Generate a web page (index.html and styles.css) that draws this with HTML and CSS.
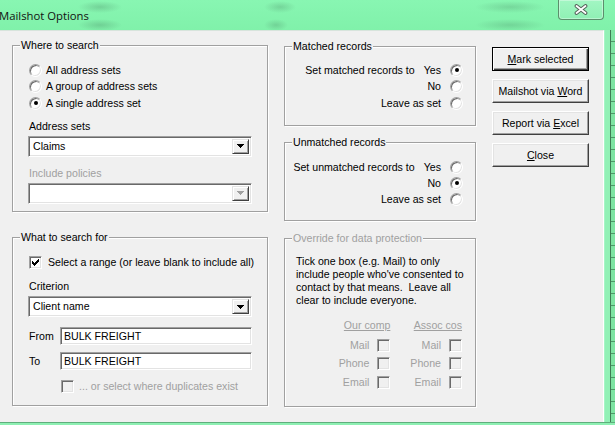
FILE: index.html
```html
<!DOCTYPE html>
<html>
<head>
<meta charset="utf-8">
<title>Mailshot Options</title>
<link rel="stylesheet" href="styles.css">
</head>
<body>
<div class="screen">
  <div class="titlebar">
    <span class="title">Mailshot Options</span>
    <div class="close-btn">
      <svg width="14" height="11" viewBox="0 0 14 11"><path d="M2.5 2 L11.5 9 M11.5 2 L2.5 9" stroke="#55625a" stroke-width="3.8" stroke-linecap="round"/><path d="M2.5 2 L11.5 9 M11.5 2 L2.5 9" stroke="#fff" stroke-width="1.8" stroke-linecap="round"/></svg>
    </div>
  </div>
  <div class="main">
    <div class="client">
      <div class="col-left">
        <div class="group g-where">
          <div class="legend">Where to search</div>
          <div class="radio-list">
            <div class="opt"><span class="radio"></span>All address sets</div>
            <div class="opt"><span class="radio"></span>A group of address sets</div>
            <div class="opt"><span class="radio on"></span>A single address set</div>
          </div>
          <div class="flabel">Address sets</div>
          <div class="combo"><span class="combo-text">Claims</span><span class="dd"><svg width="7" height="4" viewBox="0 0 7 4" shape-rendering="crispEdges"><path d="M0 0h7v1h-1v1h-1v1h-1v1h-1v-1h-1v-1h-1v-1h-1z" fill="#000"/></svg></span></div>
          <div class="flabel dim gap-lg">Include policies</div>
          <div class="combo"><span class="combo-text"></span><span class="dd"><svg width="7" height="4" viewBox="0 0 7 4" shape-rendering="crispEdges"><path d="M0 0h7v1h-1v1h-1v1h-1v1h-1v-1h-1v-1h-1v-1h-1z" fill="#a0a0a0"/></svg></span></div>
        </div>

        <div class="group g-what">
          <div class="legend">What to search for</div>
          <div class="check-row">
            <span class="check"><svg width="7" height="7" viewBox="0 0 7 7" shape-rendering="crispEdges"><path d="M0 2h1v1h1v1h1v-1h1v-1h1v-1h1v-1h1v3h-1v1h-1v1h-1v1h-1v1h-1v-1h-1v-1h-1z" fill="#000"/></svg></span>
            <span>Select a range (or leave blank to include all)</span>
          </div>
          <div class="flabel gap-lg">Criterion</div>
          <div class="combo"><span class="combo-text">Client name</span><span class="dd"><svg width="7" height="4" viewBox="0 0 7 4" shape-rendering="crispEdges"><path d="M0 0h7v1h-1v1h-1v1h-1v1h-1v-1h-1v-1h-1v-1h-1z" fill="#000"/></svg></span></div>
          <div class="tb-row">
            <span class="tb-label">From</span>
            <span class="textbox">BULK FREIGHT</span>
          </div>
          <div class="tb-row tb-second">
            <span class="tb-label">To</span>
            <span class="textbox">BULK FREIGHT</span>
          </div>
          <div class="dup-row">
            <span class="check disabled"></span>
            <span>... or select where duplicates exist</span>
          </div>
        </div>
      </div>

      <div class="col-mid">
        <div class="group g-matched">
          <div class="legend">Matched records</div>
          <div class="rrows">
            <div class="rrow"><span>Set matched records to<span class="sep"></span>Yes</span><span class="radio on"></span></div>
            <div class="rrow"><span>No</span><span class="radio"></span></div>
            <div class="rrow"><span>Leave as set</span><span class="radio"></span></div>
          </div>
        </div>
        <div class="group g-unmatched">
          <div class="legend">Unmatched records</div>
          <div class="rrows">
            <div class="rrow"><span>Set unmatched records to<span class="sep"></span>Yes</span><span class="radio"></span></div>
            <div class="rrow"><span>No</span><span class="radio on"></span></div>
            <div class="rrow"><span>Leave as set</span><span class="radio"></span></div>
          </div>
        </div>
        <div class="group g-override">
          <div class="legend dim">Override for data protection</div>
          <p class="ov-text">Tick one box (e.g. Mail) to only<br>include people who've consented to<br>contact by that means.&nbsp; Leave all<br>clear to include everyone.</p>
          <div class="ov-grid">
            <div class="ov-col">
              <div class="ov-head">Our comp</div>
              <div class="ov-row"><span>Mail</span><span class="check disabled"></span></div>
              <div class="ov-row"><span>Phone</span><span class="check disabled"></span></div>
              <div class="ov-row"><span>Email</span><span class="check disabled"></span></div>
            </div>
            <div class="ov-col">
              <div class="ov-head">Assoc cos</div>
              <div class="ov-row"><span>Mail</span><span class="check disabled"></span></div>
              <div class="ov-row"><span>Phone</span><span class="check disabled"></span></div>
              <div class="ov-row"><span>Email</span><span class="check disabled"></span></div>
            </div>
          </div>
        </div>
      </div>

      <div class="col-btns">
        <button class="btn default"><span><u>M</u>ark selected</span></button>
        <button class="btn"><span>Mailshot via <u>W</u>ord</span></button>
        <button class="btn"><span>Report via <u>E</u>xcel</span></button>
        <button class="btn"><span><u>C</u>lose</span></button>
      </div>
    </div>
    <div class="frame-right"></div>
  </div>
  <div class="bottom-strip"></div>
</div>
</body>
</html>
```

FILE: styles.css
```css
* { box-sizing: border-box; }
html, body { margin: 0; padding: 0; }
body {
  width: 615px;
  height: 425px;
  overflow: hidden;
  background: #7fe7a3;
  font-family: "Liberation Sans", Arial, sans-serif;
  font-size: 10.6px;
  line-height: 13px;
  color: #000;
  white-space: nowrap;
}
.screen {
  width: 615px;
  height: 425px;
  display: flex;
  flex-direction: column;
}

/* ---------- title bar ---------- */
.titlebar {
  height: 30px;
  flex: none;
  display: flex;
  align-items: flex-start;
  background:
    radial-gradient(ellipse 22px 6px at 100px 7px, rgba(70,130,95,.30), rgba(70,130,95,0)),
    radial-gradient(ellipse 22px 6px at 100px 25px, rgba(70,130,95,.30), rgba(70,130,95,0)),
    radial-gradient(ellipse 16px 6px at 280px 7px, rgba(70,130,95,.28), rgba(70,130,95,0)),
    radial-gradient(ellipse 12px 6px at 276px 25px, rgba(70,130,95,.28), rgba(70,130,95,0)),
    radial-gradient(ellipse 35px 6px at 510px 7px, rgba(70,130,95,.26), rgba(70,130,95,0)),
    radial-gradient(ellipse 35px 6px at 510px 25px, rgba(70,130,95,.26), rgba(70,130,95,0)),
    linear-gradient(#88f6b2, #80f1aa);
}
.title {
  font-family: "Open Sans", "Liberation Sans", sans-serif;
  font-size: 11.3px;
  line-height: 16px;
  margin: 8px 0 0 -1px;
  color: #111;
}
.close-btn {
  margin-left: auto;
  margin-right: 11px;
  width: 46px;
  height: 20px;
  border: 1px solid #5c8e6c;
  border-top: none;
  border-radius: 0 0 4px 4px;
  background: linear-gradient(#a2f6c3, #8ff0b4);
  box-shadow: inset 0 0 0 1px rgba(255,255,255,.35);
  display: flex;
  align-items: center;
  justify-content: center;
}

/* ---------- main area ---------- */
.main {
  display: flex;
  height: 392px;
  flex: none;
}
.client {
  width: 604px;
  height: 392px;
  flex: none;
  background: #f0f0f0;
  border-top: 1px solid #d7e4dc;
  border-right: 1px solid #ffffff;
  padding: 14px 0 0 12px;
  display: flex;
  align-items: flex-start;
}
.frame-right {
  flex: 1;
  background:
    linear-gradient(to right, #a6f5c6 0 1px, #92f1b6 1px 6px, #3f7c55 6px 7px, rgba(0,0,0,0) 7px),
    repeating-linear-gradient(to bottom, #7de4a2 0 11px, #4d9868 11px 12px);
}
.bottom-strip {
  flex: 1;
  background: linear-gradient(#5fae7c 0 1px, #8ef0b3 1px);
}

/* ---------- columns ---------- */
.col-left {
  width: 256px;
  display: flex;
  flex-direction: column;
}
.col-mid {
  width: 192px;
  margin-left: 16px;
  padding-top: 1px;
  display: flex;
  flex-direction: column;
}
.col-btns {
  width: 97px;
  margin-left: 16px;
  padding-top: 2px;
  display: flex;
  flex-direction: column;
  gap: 8px;
}

/* ---------- group boxes ---------- */
.group {
  border: 1px solid #a0a0a0;
  box-shadow: inset 1px 1px 0 #fff, 1px 1px 0 #fff;
}
.legend {
  display: table;
  margin: -7px 0 0 7px;
  padding: 0 1px;
  background: #f0f0f0;
  line-height: 13px;
}
.g-where .legend,
.g-what .legend { margin-left: -8px; }
.dim { color: #a0a0a0; }

.g-where { height: 167px; padding: 0 15px; }
.g-what { height: 169px; margin-top: 25px; padding: 0 15px; }
.g-matched { height: 80px; }
.g-unmatched { height: 79px; margin-top: 16px; }
.g-override { height: 169px; margin-top: 17px; color: #000; }

/* ---------- radios & checks ---------- */
.radio {
  width: 13px;
  height: 13px;
  flex: none;
  border-radius: 50%;
  background: #fff;
  border: 1px solid;
  border-color: #a0a0a0 #ffffff #ffffff #a0a0a0;
  box-shadow: inset 1px 1px 0 #696969, inset -1px -1px 0 #e3e3e3;
  display: flex;
  align-items: center;
  justify-content: center;
}
.radio.on::after {
  content: "";
  width: 4px;
  height: 4px;
  border-radius: 50%;
  background: #000;
}
.check {
  width: 13px;
  height: 13px;
  flex: none;
  background: #fff;
  border: 1px solid;
  border-color: #a0a0a0 #ffffff #ffffff #a0a0a0;
  box-shadow: inset 1px 1px 0 #696969, inset -1px -1px 0 #e3e3e3;
  display: flex;
  align-items: center;
  justify-content: center;
}
.check.disabled { background: #f0f0f0; }

.radio-list { margin-top: 10px; padding-left: 1px; }
.opt {
  display: flex;
  align-items: center;
  gap: 4px;
  height: 16.5px;
}

/* ---------- labels / combos / textboxes ---------- */
.flabel { padding-left: 1px; margin-top: 8px; }
.flabel.gap-lg { margin-top: 10px; }
.combo {
  margin-top: 3px;
  height: 21px;
  background: #fff;
  border: 1px solid;
  border-color: #a0a0a0 #ffffff #ffffff #a0a0a0;
  box-shadow: inset 1px 1px 0 #696969, inset -1px -1px 0 #e3e3e3;
  padding: 2px;
  display: flex;
  align-items: center;
}
.combo-text { padding-left: 2px; flex: 1; }
.dd {
  width: 17px;
  align-self: stretch;
  background: #f0f0f0;
  border: 1px solid;
  border-color: #e3e3e3 #404040 #404040 #e3e3e3;
  box-shadow: inset 1px 1px 0 #fff, inset -1px -1px 0 #a0a0a0;
  display: flex;
  align-items: center;
  justify-content: center;
}

.check-row {
  display: flex;
  align-items: center;
  gap: 6px;
  height: 16px;
  margin-top: 10px;
  padding-left: 1px;
}
.tb-row {
  display: flex;
  align-items: center;
  margin-top: 10px;
  padding-left: 1px;
}
.tb-row.tb-second { margin-top: 7px; }
.tb-label { width: 31px; flex: none; }
.textbox {
  flex: 1;
  height: 18px;
  background: #fff;
  border: 1px solid;
  border-color: #a0a0a0 #ffffff #ffffff #a0a0a0;
  box-shadow: inset 1px 1px 0 #696969, inset -1px -1px 0 #e3e3e3;
  padding-left: 3px;
  line-height: 16px;
}
.dup-row {
  display: flex;
  align-items: center;
  gap: 5px;
  height: 16px;
  margin-top: 8px;
  padding-left: 33px;
  color: #a0a0a0;
}

/* ---------- matched / unmatched ---------- */
.rrows { margin-top: 9px; }
.g-unmatched .rrows { margin-top: 10px; }
.rrow {
  display: flex;
  justify-content: flex-end;
  align-items: center;
  gap: 9px;
  height: 16.5px;
  padding-right: 12px;
}
.g-unmatched .rrow { height: 16px; }
.sep { display: inline-block; width: 9px; }

/* ---------- override ---------- */
.ov-text {
  margin: 10px 0 0 0;
  padding-left: 11px;
  line-height: 13px;
}
.ov-grid {
  display: flex;
  justify-content: flex-end;
  gap: 20px;
  padding-right: 13px;
  margin-top: 12px;
  color: #a0a0a0;
}
.ov-col {
  display: flex;
  flex-direction: column;
  align-items: flex-end;
}
.ov-head {
  text-decoration: underline;
  line-height: 13px;
  margin-bottom: 4px;
}
.ov-row {
  display: flex;
  align-items: center;
  gap: 8px;
  height: 18.5px;
}

/* ---------- buttons ---------- */
.btn {
  width: 97px;
  height: 24px;
  margin: 0;
  padding: 0;
  font: inherit;
  color: #000;
  background: #f0f0f0;
  border: 1px solid;
  border-color: #ffffff #404040 #404040 #ffffff;
  box-shadow: inset -1px -1px 0 #a0a0a0, inset 1px 1px 0 #e3e3e3;
  display: flex;
  align-items: center;
  justify-content: center;
}
.btn.default {
  border-color: #000;
  box-shadow: inset 1px 1px 0 #fff, inset -1px -1px 0 #404040, inset -2px -2px 0 #a0a0a0;
}
```
